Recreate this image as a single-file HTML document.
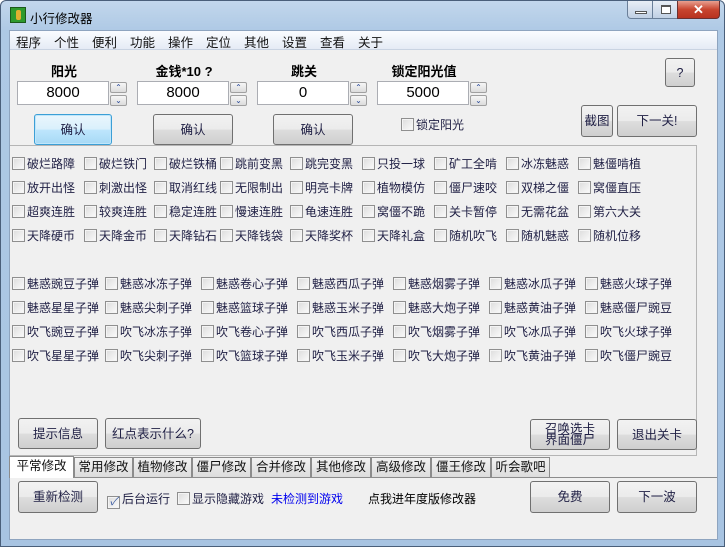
<!DOCTYPE html>
<html><head><meta charset="utf-8"><style>
*{margin:0;padding:0;box-sizing:border-box}
body{width:725px;height:547px;overflow:hidden;background:#fff;font-family:"Liberation Sans","Noto Sans CJK SC",sans-serif;font-size:12px;color:#1f1f44}
.win{position:absolute;left:0;top:0;width:725px;height:547px;background:linear-gradient(#c2d7ec,#aec9e5 30px,#a8c4e2);border:1px solid #4a5f7a;border-radius:6px 6px 0 0}
.client{position:absolute;left:8px;top:29px;width:709px;height:510px;background:#f0f0f0;border:1px solid #8ea4bf}
.a{position:absolute;white-space:nowrap}
.menu{position:absolute;left:0;top:0;width:707px;height:19px;background:linear-gradient(#fafcff,#e5ebf5);border-bottom:1px solid #c9d3e2}
.menu span{position:absolute;top:1px;font-size:12.5px;color:#111}
.btn{position:absolute;border:1px solid #707070;border-radius:3px;background:linear-gradient(#f2f2f2 0,#ebebeb 50%,#dddddd 51%,#cfcfcf 100%);text-align:center;font-size:12.5px;color:#1f1f44;display:flex;align-items:center;justify-content:center;line-height:12px}
.cb{position:absolute;white-space:nowrap;font-size:12px;line-height:15px}
.cb i{display:inline-block;width:13px;height:13px;border:1px solid #8f8f8f;background:linear-gradient(135deg,#dcdcdc,#fbfbfb);vertical-align:-2px;margin-right:2px;box-shadow:inset 0 0 0 1px #f4f4f4}
.lbl{position:absolute;font-weight:bold;font-size:13px;color:#000;text-align:center}
.inp{position:absolute;height:24px;background:#fff;border:1px solid #abadb3;text-align:center;font-size:15px;line-height:22px;color:#000}
.spin{position:absolute;width:17px;height:24px}
.spin div{height:11px;margin-bottom:2px;border:1px solid #a0a0a0;border-radius:2px;background:linear-gradient(#f6f6f6,#dcdcdc);font-size:8px;line-height:9px;text-align:center;color:#2a4a9a}
.tab{position:absolute;top:426px;height:20px;border:1px solid #8c8c8c;border-bottom:none;background:linear-gradient(#f2f2f2,#dcdcdc);font-size:12.5px;line-height:18px;text-align:center;color:#111}
</style></head><body>
<div class="win">
 <div class="a" style="left:9px;top:6px;width:16px;height:16px;background:#2e9a2e;border:1px solid #1a5a1a"><div style="margin:2px 5px;width:5px;height:10px;background:#e0b030;border-radius:2px"></div></div>
 <div class="a" style="left:29px;top:7px;font-size:12.5px;color:#000">小行修改器</div>
 <div class="a" style="left:626px;top:0;width:26px;height:18px;border:1px solid #6a7f99;border-top:none;border-radius:0 0 0 4px;background:linear-gradient(#e8eef6,#c0d0e4)"><div style="margin:10px 7px 0;width:12px;height:3px;border:1px solid #555;background:#fff"></div></div>
 <div class="a" style="left:651px;top:0;width:26px;height:18px;border:1px solid #6a7f99;border-top:none;background:linear-gradient(#e8eef6,#c0d0e4)"><div style="margin:4px 8px 0;width:10px;height:9px;border:1px solid #555;border-top-width:2px;background:#fff"></div></div>
 <div class="a" style="left:676px;top:0;width:43px;height:18px;border:1px solid #6a3030;border-top:none;border-radius:0 0 4px 0;background:linear-gradient(#e8a090,#c8452f 50%,#b83220);color:#fff;font-weight:bold;text-align:center;font-size:13px;line-height:17px">✕</div>
 <div class="client">
  <div class="menu">
   <span style="left:6px">程序</span><span style="left:44px">个性</span><span style="left:82px">便利</span><span style="left:120px">功能</span><span style="left:158px">操作</span><span style="left:196px">定位</span><span style="left:234px">其他</span><span style="left:272px">设置</span><span style="left:310px">查看</span><span style="left:348px">关于</span>
  </div>
  <div class="lbl" style="left:8px;top:30px;width:92px">阳光</div>
  <div class="lbl" style="left:128px;top:30px;width:92px">金钱*10 ?</div>
  <div class="lbl" style="left:248px;top:30px;width:92px">跳关</div>
  <div class="lbl" style="left:368px;top:30px;width:92px">锁定阳光值</div>
  <div class="inp" style="left:7px;top:50px;width:92px">8000</div><div class="spin" style="left:100px;top:51px"><div>⌃</div><div>⌄</div></div>
  <div class="inp" style="left:127px;top:50px;width:92px">8000</div><div class="spin" style="left:220px;top:51px"><div>⌃</div><div>⌄</div></div>
  <div class="inp" style="left:247px;top:50px;width:92px">0</div><div class="spin" style="left:340px;top:51px"><div>⌃</div><div>⌄</div></div>
  <div class="inp" style="left:367px;top:50px;width:92px">5000</div><div class="spin" style="left:460px;top:51px"><div>⌃</div><div>⌄</div></div>
  <div class="btn" style="left:24px;top:83px;width:78px;height:31px;border-color:#3c9fd6;background:linear-gradient(#eaf6fd,#d9f0fc 50%,#bee6fd 51%,#a7d9f5);box-shadow:inset 0 0 0 1px #bfe6fb">确认</div>
  <div class="btn" style="left:143px;top:83px;width:80px;height:31px">确认</div>
  <div class="btn" style="left:263px;top:83px;width:80px;height:31px">确认</div>
  <div class="cb" style="left:391px;top:87px"><i></i>锁定阳光</div>
  <div class="btn" style="left:655px;top:27px;width:30px;height:29px">?</div>
  <div class="btn" style="left:571px;top:74px;width:32px;height:32px">截图</div>
  <div class="btn" style="left:607px;top:74px;width:80px;height:32px">下一关!</div>
  <div class="a" style="left:0px;top:114px;width:687px;height:311px;border:1px solid #b5b5b5;border-left:none"></div>

  <div class="cb" style="left:2px;top:126px"><i></i>破烂路障</div><div class="cb" style="left:74px;top:126px"><i></i>破烂铁门</div><div class="cb" style="left:144px;top:126px"><i></i>破烂铁桶</div><div class="cb" style="left:210px;top:126px"><i></i>跳前变黑</div><div class="cb" style="left:280px;top:126px"><i></i>跳完变黑</div><div class="cb" style="left:352px;top:126px"><i></i>只投一球</div><div class="cb" style="left:424px;top:126px"><i></i>矿工全啃</div><div class="cb" style="left:496px;top:126px"><i></i>冰冻魅惑</div><div class="cb" style="left:568px;top:126px"><i></i>魅僵啃植</div>
  <div class="cb" style="left:2px;top:150px"><i></i>放开出怪</div><div class="cb" style="left:74px;top:150px"><i></i>刺激出怪</div><div class="cb" style="left:144px;top:150px"><i></i>取消红线</div><div class="cb" style="left:210px;top:150px"><i></i>无限制出</div><div class="cb" style="left:280px;top:150px"><i></i>明亮卡牌</div><div class="cb" style="left:352px;top:150px"><i></i>植物模仿</div><div class="cb" style="left:424px;top:150px"><i></i>僵尸速咬</div><div class="cb" style="left:496px;top:150px"><i></i>双梯之僵</div><div class="cb" style="left:568px;top:150px"><i></i>窝僵直压</div>
  <div class="cb" style="left:2px;top:174px"><i></i>超爽连胜</div><div class="cb" style="left:74px;top:174px"><i></i>较爽连胜</div><div class="cb" style="left:144px;top:174px"><i></i>稳定连胜</div><div class="cb" style="left:210px;top:174px"><i></i>慢速连胜</div><div class="cb" style="left:280px;top:174px"><i></i>龟速连胜</div><div class="cb" style="left:352px;top:174px"><i></i>窝僵不跪</div><div class="cb" style="left:424px;top:174px"><i></i>关卡暂停</div><div class="cb" style="left:496px;top:174px"><i></i>无需花盆</div><div class="cb" style="left:568px;top:174px"><i></i>第六大关</div>
  <div class="cb" style="left:2px;top:198px"><i></i>天降硬币</div><div class="cb" style="left:74px;top:198px"><i></i>天降金币</div><div class="cb" style="left:144px;top:198px"><i></i>天降钻石</div><div class="cb" style="left:210px;top:198px"><i></i>天降钱袋</div><div class="cb" style="left:280px;top:198px"><i></i>天降奖杯</div><div class="cb" style="left:352px;top:198px"><i></i>天降礼盒</div><div class="cb" style="left:424px;top:198px"><i></i>随机吹飞</div><div class="cb" style="left:496px;top:198px"><i></i>随机魅惑</div><div class="cb" style="left:568px;top:198px"><i></i>随机位移</div>

  <div class="cb" style="left:2px;top:246px"><i></i>魅惑豌豆子弹</div><div class="cb" style="left:95px;top:246px"><i></i>魅惑冰冻子弹</div><div class="cb" style="left:191px;top:246px"><i></i>魅惑卷心子弹</div><div class="cb" style="left:287px;top:246px"><i></i>魅惑西瓜子弹</div><div class="cb" style="left:383px;top:246px"><i></i>魅惑烟雾子弹</div><div class="cb" style="left:479px;top:246px"><i></i>魅惑冰瓜子弹</div><div class="cb" style="left:575px;top:246px"><i></i>魅惑火球子弹</div>
  <div class="cb" style="left:2px;top:270px"><i></i>魅惑星星子弹</div><div class="cb" style="left:95px;top:270px"><i></i>魅惑尖刺子弹</div><div class="cb" style="left:191px;top:270px"><i></i>魅惑篮球子弹</div><div class="cb" style="left:287px;top:270px"><i></i>魅惑玉米子弹</div><div class="cb" style="left:383px;top:270px"><i></i>魅惑大炮子弹</div><div class="cb" style="left:479px;top:270px"><i></i>魅惑黄油子弹</div><div class="cb" style="left:575px;top:270px"><i></i>魅惑僵尸豌豆</div>
  <div class="cb" style="left:2px;top:294px"><i></i>吹飞豌豆子弹</div><div class="cb" style="left:95px;top:294px"><i></i>吹飞冰冻子弹</div><div class="cb" style="left:191px;top:294px"><i></i>吹飞卷心子弹</div><div class="cb" style="left:287px;top:294px"><i></i>吹飞西瓜子弹</div><div class="cb" style="left:383px;top:294px"><i></i>吹飞烟雾子弹</div><div class="cb" style="left:479px;top:294px"><i></i>吹飞冰瓜子弹</div><div class="cb" style="left:575px;top:294px"><i></i>吹飞火球子弹</div>
  <div class="cb" style="left:2px;top:318px"><i></i>吹飞星星子弹</div><div class="cb" style="left:95px;top:318px"><i></i>吹飞尖刺子弹</div><div class="cb" style="left:191px;top:318px"><i></i>吹飞篮球子弹</div><div class="cb" style="left:287px;top:318px"><i></i>吹飞玉米子弹</div><div class="cb" style="left:383px;top:318px"><i></i>吹飞大炮子弹</div><div class="cb" style="left:479px;top:318px"><i></i>吹飞黄油子弹</div><div class="cb" style="left:575px;top:318px"><i></i>吹飞僵尸豌豆</div>

  <div class="btn" style="left:8px;top:387px;width:80px;height:31px">提示信息</div>
  <div class="btn" style="left:95px;top:387px;width:96px;height:31px">红点表示什么?</div>
  <div class="btn" style="left:520px;top:388px;width:80px;height:31px;line-height:11px">召唤选卡<br>界面僵尸</div>
  <div class="btn" style="left:607px;top:388px;width:80px;height:31px">退出关卡</div>

  <div class="tab" style="left:-1px;top:425px;width:65px;height:22px;background:#fff;z-index:2;border-color:#8c8c8c">平常修改</div>
  <div class="tab" style="left:64px;width:59px">常用修改</div>
  <div class="tab" style="left:123px;width:59px">植物修改</div>
  <div class="tab" style="left:182px;width:59px">僵尸修改</div>
  <div class="tab" style="left:241px;width:60px">合并修改</div>
  <div class="tab" style="left:301px;width:60px">其他修改</div>
  <div class="tab" style="left:361px;width:60px">高级修改</div>
  <div class="tab" style="left:421px;width:60px">僵王修改</div>
  <div class="tab" style="left:481px;width:59px">听会歌吧</div>
  <div class="a" style="left:0;top:446px;width:707px;height:62px;border-top:1px solid #8c8c8c"></div>

  <div class="btn" style="left:8px;top:450px;width:80px;height:32px">重新检测</div>
  <div class="cb" style="left:97px;top:461px"><i style="text-align:center;font-size:11px;line-height:10px;color:#3a5aa0">✓</i>后台运行</div>
  <div class="cb" style="left:167px;top:461px"><i></i>显示隐藏游戏</div>
  <div class="a" style="left:261px;top:461px;color:#0000ee;line-height:15px">未检测到游戏</div>
  <div class="a" style="left:358px;top:461px;color:#000;line-height:15px">点我进年度版修改器</div>
  <div class="btn" style="left:520px;top:450px;width:80px;height:32px">免费</div>
  <div class="btn" style="left:607px;top:450px;width:80px;height:32px">下一波</div>
 </div>
</div>
</body></html>
